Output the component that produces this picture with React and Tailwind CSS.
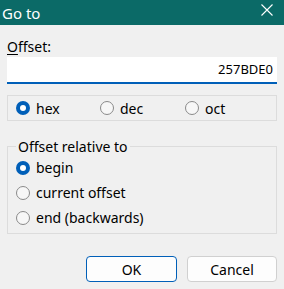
import React from "react";

function Radio({ checked, label, className = "" }) {
  return (
    <div className={"flex items-center " + className}>
      {checked ? (
        <span className="w-[14px] h-[14px] rounded-full bg-[#005fb8] flex items-center justify-center shrink-0">
          <span className="w-[6px] h-[6px] rounded-full bg-white" />
        </span>
      ) : (
        <span className="w-[14px] h-[14px] rounded-full border border-[#8a8a8a] bg-[#f7f7f7] shrink-0" />
      )}
      <span className="ml-[6px] text-[14px] leading-[17px] text-black whitespace-nowrap">{label}</span>
    </div>
  );
}

export default function App() {
  return (
    <div
      className="w-[284px] h-[289px] bg-[#f0f0f0] flex flex-col overflow-hidden"
      style={{ fontFamily: '"Segoe UI", "Noto Sans", "Open Sans", sans-serif' }}
    >
      <div className="h-[25px] bg-[#0b6a67] flex items-center justify-between shrink-0">
        <span className="pl-[2px] text-white text-[15px] leading-[20px]">Go to</span>
        <svg width="12" height="12" viewBox="0 0 12 12" className="mr-[11px] -mt-[5px]">
          <path d="M0.5 0.5 L11.5 11.5 M11.5 0.5 L0.5 11.5" stroke="white" strokeWidth="1.1" fill="none" />
        </svg>
      </div>
      <div className="px-[7px] flex flex-col">
        <div className="mt-[13px] text-[14px] leading-[17px] text-black">
          <span className="underline underline-offset-2">O</span>ffset:
        </div>
        <div className="mt-[2px] h-[27px] bg-white border-b-2 border-[#005fb8] flex items-center justify-end pr-[4px] text-[13px] text-black">
          257BDE0
        </div>
        <div className="mt-[11px] h-[26px] border border-[#dcdcdc] grid grid-cols-[84px_85px_1fr] items-center pl-[8px]">
          <Radio checked label="hex" />
          <Radio label="dec" />
          <Radio label="oct" />
        </div>
        <fieldset className="mt-[17px] border border-[#dcdcdc] h-[96px] pl-[8px]">
          <legend className="px-[2px] text-[14px] leading-[17px] text-black">Offset relative to</legend>
          <Radio checked label="begin" className="h-[25px]" />
          <Radio label="current offset" className="h-[25px]" />
          <Radio label="end (backwards)" className="h-[25px]" />
        </fieldset>
        <div className="mt-[22px] flex justify-end gap-[10px]">
          <button className="w-[91px] h-[26px] rounded-[4px] border border-[#005fb8] bg-[#fdfdfd] text-[14px] text-black">OK</button>
          <button className="w-[90px] h-[26px] rounded-[4px] border border-[#d0d0d0] bg-[#fdfdfd] text-[14px] text-black">Cancel</button>
        </div>
      </div>
    </div>
  );
}
